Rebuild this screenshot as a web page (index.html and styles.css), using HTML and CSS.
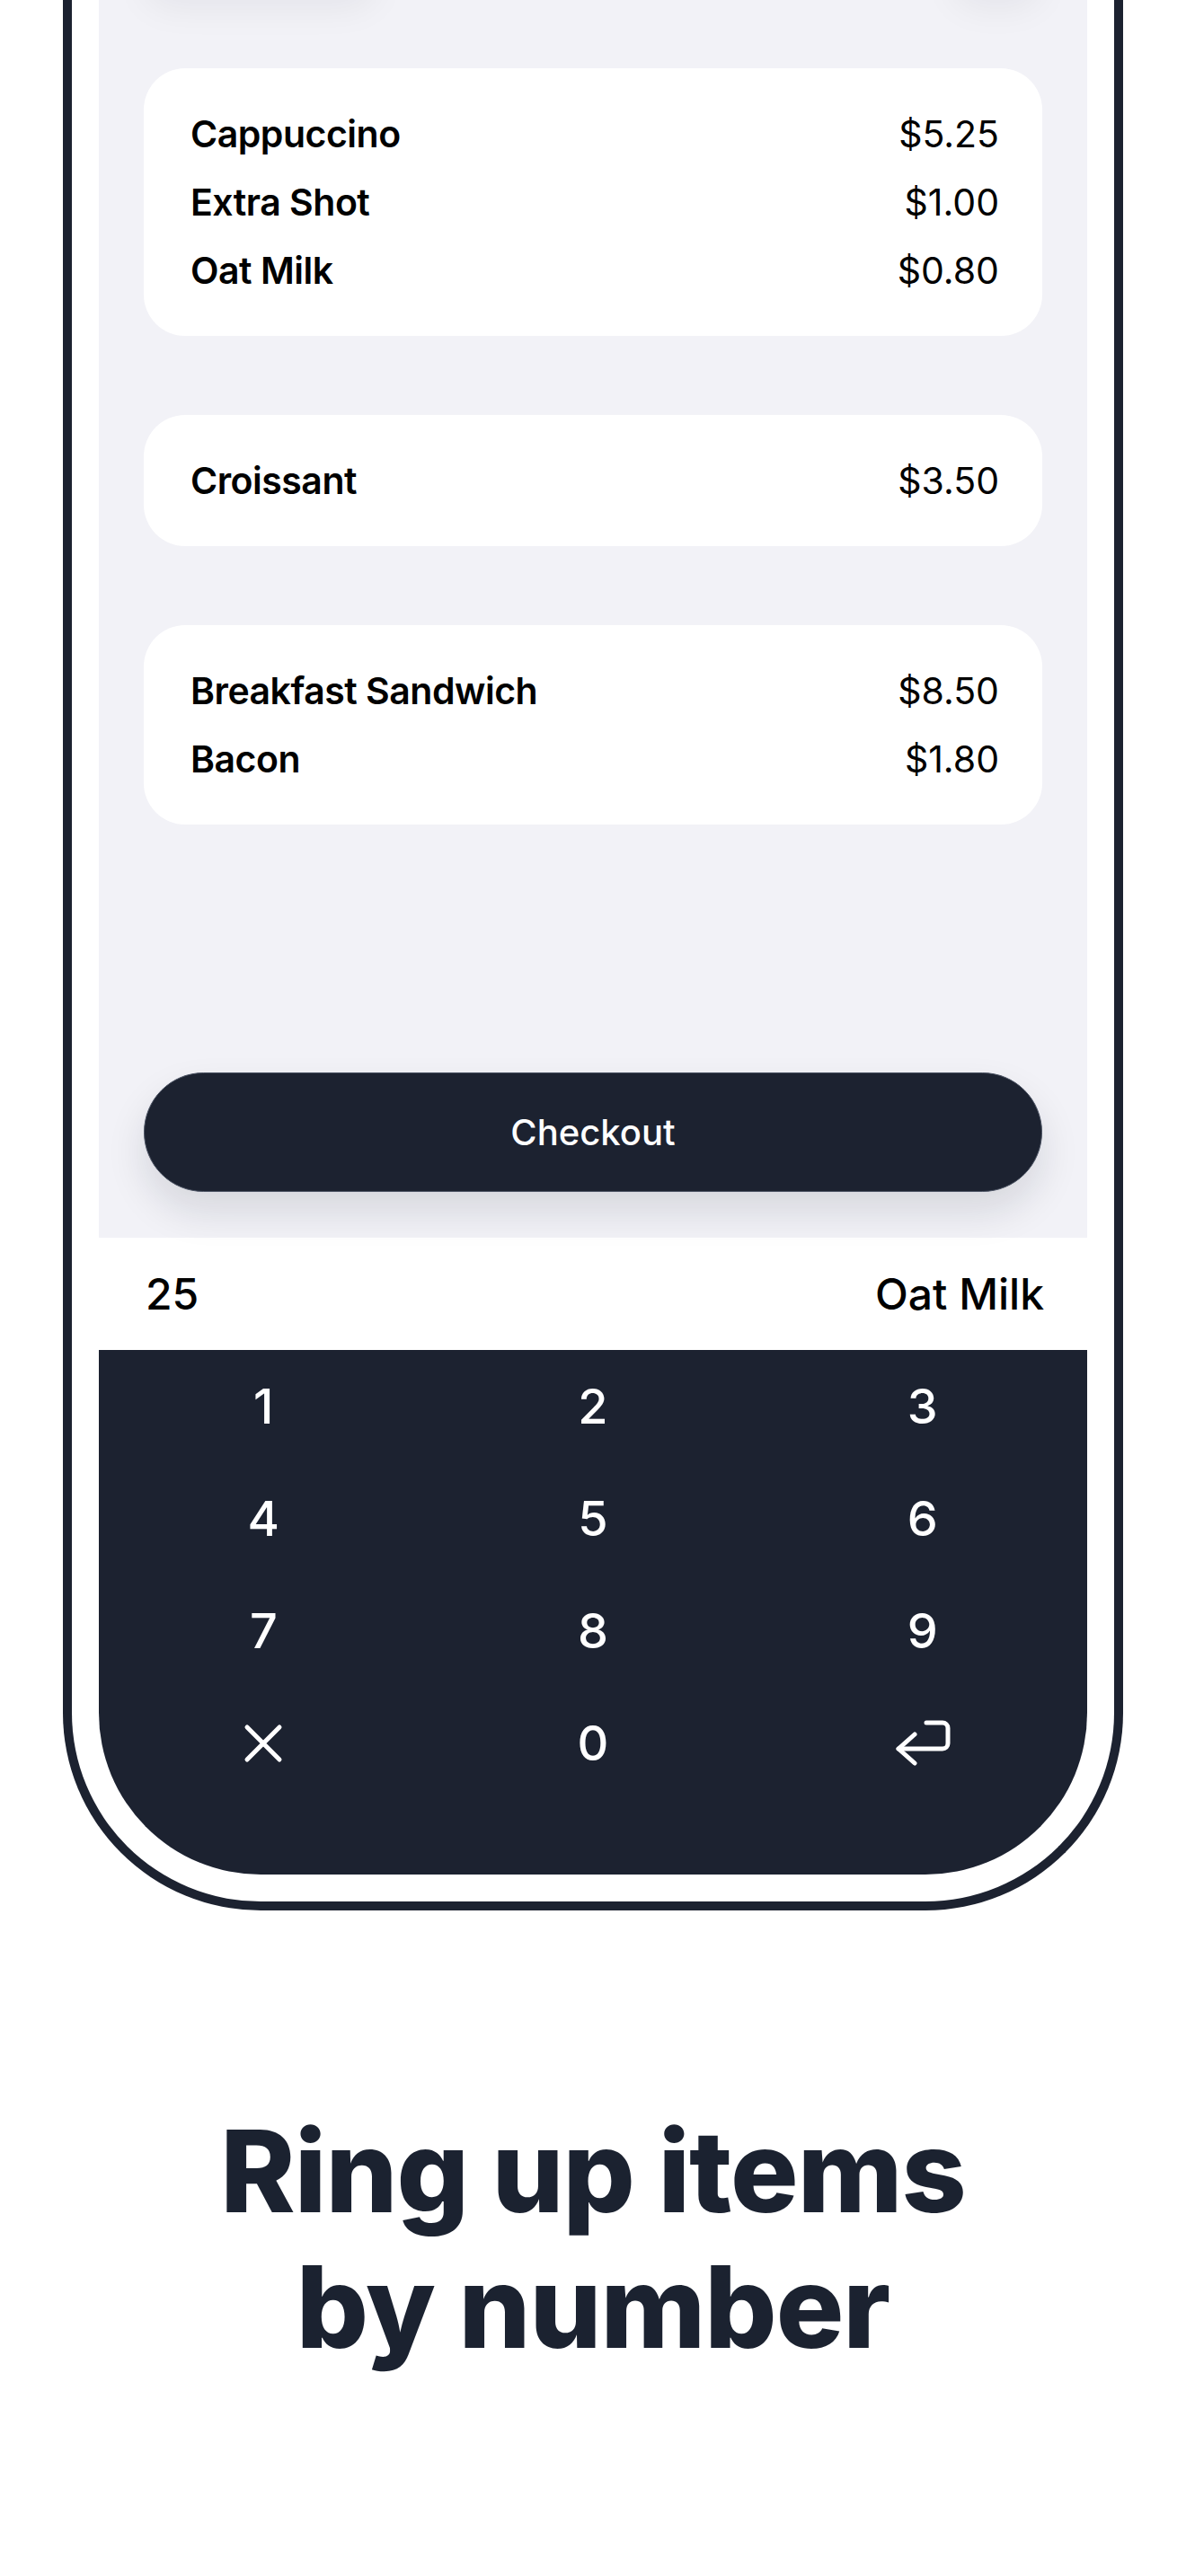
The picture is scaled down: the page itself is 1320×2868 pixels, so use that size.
FILE: index.html
```html
<!DOCTYPE html>
<html lang="en">
<head>
    <meta charset="UTF-8">
    <meta name="viewport" content="width=device-width, initial-scale=1.0">
    <title>Ring up items by number</title>
    <link rel="stylesheet" href="styles.css">
</head>
<body>
    <div class="device">
        <div class="screen">
            <div class="order">
                <div class="toolbar">
                    <span class="tool tool-wide"></span>
                    <span class="tool"></span>
                </div>

                <div class="card">
                    <div class="line"><span class="name">Cappuccino</span><span class="price">$5.25</span></div>
                    <div class="line"><span class="name">Extra Shot</span><span class="price">$1.00</span></div>
                    <div class="line"><span class="name">Oat Milk</span><span class="price">$0.80</span></div>
                </div>
                <div class="card">
                    <div class="line"><span class="name">Croissant</span><span class="price">$3.50</span></div>
                </div>
                <div class="card">
                    <div class="line"><span class="name">Breakfast Sandwich</span><span class="price">$8.50</span></div>
                    <div class="line"><span class="name">Bacon</span><span class="price">$1.80</span></div>
                </div>

                <button class="checkout">Checkout</button>
            </div>

            <div class="entry">
                <span class="entry-code">25</span>
                <span class="entry-item">Oat Milk</span>
            </div>

            <div class="keypad">
                <button class="key">1</button>
                <button class="key">2</button>
                <button class="key">3</button>
                <button class="key">4</button>
                <button class="key">5</button>
                <button class="key">6</button>
                <button class="key">7</button>
                <button class="key">8</button>
                <button class="key">9</button>
                <button class="key" aria-label="Clear">
                    <svg width="44" height="44" viewBox="0 0 44 44" fill="none" stroke="currentColor" stroke-width="5" stroke-linecap="round">
                        <path d="M4 4 L40 40 M40 4 L4 40"/>
                    </svg>
                </button>
                <button class="key">0</button>
                <button class="key" aria-label="Enter">
                    <svg width="62" height="52" viewBox="0 0 62 52" fill="none" stroke="currentColor" stroke-width="5" stroke-linecap="round" stroke-linejoin="round">
                        <path d="M35 3 H53 a6 6 0 0 1 6 6 V26 a6 6 0 0 1 -6 6 H4"/>
                        <path d="M22 16 L4 32 L22 48"/>
                    </svg>
                </button>
            </div>
        </div>
    </div>

    <h1 class="headline">Ring up items<br>by number</h1>
</body>
</html>
```

FILE: styles.css
```css
body {
    margin: 0;
    background-color: #ffffff;
    font-family: Inter, "Noto Sans", sans-serif;
    color: #000000;
}
.device {
    margin: 0 70px;
    padding: 0 30px 30px;
    background-color: #ffffff;
    border: 10px solid #1c2230;
    border-top: none;
    border-radius: 0 0 220px 220px;
}
.screen {
    background-color: #f2f2f7;
    border-radius: 0 0 180px 180px;
    overflow: hidden;
}
.order {
    display: flex;
    flex-direction: column;
    padding: 76px 50px 51px;
}
.toolbar {
    display: flex;
    justify-content: space-between;
    height: 60px;
    margin: -151px 0 91px;
}
.tool {
    width: 100px;
    border-radius: 30px;
    background-color: #f2f2f7;
    box-shadow: 0 24px 40px rgba(20, 24, 40, 0.06);
}
.tool-wide {
    width: 260px;
}
.card {
    background-color: #ffffff;
    border-radius: 46px;
    padding: 35px 48px 35px 52px;
    margin-bottom: 88px;
}
.card:last-of-type {
    margin-bottom: 0;
}
.line {
    display: flex;
    justify-content: space-between;
    font-size: 41px;
    line-height: 76px;
}
.name {
    font-weight: 600;
    letter-spacing: -0.012em;
}
.price {
    font-weight: 400;
}
.checkout {
    margin-top: 276px;
    height: 133px;
    border: 1px solid #4b5363;
    border-radius: 67px;
    background-color: #1c2230;
    color: #ffffff;
    font-family: inherit;
    font-size: 40px;
    font-weight: 500;
    box-shadow: 0 22px 44px rgba(20, 24, 40, 0.12);
}
.entry {
    display: flex;
    justify-content: space-between;
    align-items: center;
    height: 125px;
    padding: 0 48px 0 52px;
    background-color: #ffffff;
    font-size: 48px;
    font-weight: 500;
}
.keypad {
    display: grid;
    grid-template-columns: repeat(3, 1fr);
    grid-auto-rows: 125px;
    padding-bottom: 84px;
    background-color: #1c2230;
}
.key {
    display: flex;
    align-items: center;
    justify-content: center;
    border: none;
    background: none;
    color: #ffffff;
    font-family: inherit;
    font-size: 54px;
    font-weight: 500;
    padding: 0;
}
.headline {
    margin: 215px 0 0;
    text-align: center;
    color: #1b2230;
    font-size: 126px;
    line-height: 151px;
    font-weight: 800;
    letter-spacing: -0.008em;
}
```
